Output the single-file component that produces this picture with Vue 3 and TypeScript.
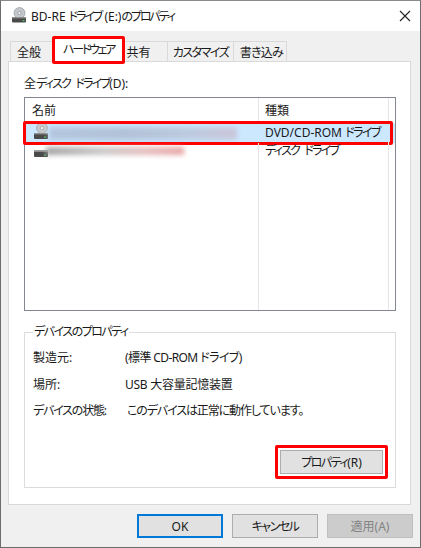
<script setup lang="ts">
const tabs: { label: string; cls: string }[] = [
  { label: '全般', cls: 't1' },
  { label: 'ハードウェア', cls: 't2 active' },
  { label: '共有', cls: 't3' },
  { label: 'カスタマイズ', cls: 't4 kn' },
  { label: '書き込み', cls: 't5' },
]
const props: { k: string; v: string; kc?: string; vc?: string }[] = [
  { k: '製造元:', v: '(標準 CD-ROM ドライブ)', vc: 'v1' },
  { k: '場所:', v: 'USB 大容量記憶装置', vc: 'v2' },
  { k: 'デバイスの状態:', v: 'このデバイスは正常に動作しています。', kc: 'k3', vc: 'v3' },
]
</script>

<template>
  <div class="win">
    <header class="title">
      <svg class="ticon" width="20" height="20" viewBox="0 0 20 20">
        <circle cx="10.5" cy="7" r="5.5" fill="#c4c8cc" stroke="#8a8d90" stroke-width=".6" />
        <circle cx="10.5" cy="7" r="1.6" fill="#f2f2f2" stroke="#777" stroke-width=".5" />
        <rect x="3" y="11" width="14" height="5.5" rx="1" fill="#4a4a4a" />
        <rect x="3" y="11" width="14" height="1.4" fill="#8d8d8d" />
        <rect x="13.5" y="14" width="2" height="1.2" fill="#52c05a" />
      </svg>
      <span class="ttext">BD-RE <span class="tk">ドライブ</span> (E:)<span class="tk">のプロパティ</span></span>
      <svg class="close" width="12" height="12" viewBox="0 0 12 12">
        <path d="M1 1 L11 11 M11 1 L1 11" stroke="#222" stroke-width="1.1" fill="none" />
      </svg>
    </header>

    <div class="body">
      <nav class="tabs">
        <div v-for="t in tabs" :key="t.label" class="tab" :class="t.cls">{{ t.label }}</div>
      </nav>

      <section class="panel">
        <div class="lbl">全<span class="kn gap">ディスク ドライブ</span>(D):</div>
        <div class="list">
          <div class="lhead">
            <div class="c1">名前</div>
            <div class="c2">種類</div>
            <div class="c3"></div>
          </div>
          <div class="row sel">
            <div class="c1">
              <svg class="dicon" width="20" height="22" viewBox="0 0 20 22">
                <circle cx="11" cy="7" r="5.5" fill="#c6c9cc" stroke="#9a9da0" stroke-width=".6" />
                <circle cx="11" cy="7" r="1.7" fill="#eee" stroke="#888" stroke-width=".5" />
                <rect x="3" y="12" width="14" height="6" rx="1" fill="#4a4a4a" />
                <rect x="3" y="12" width="14" height="1.4" fill="#909090" />
                <rect x="13" y="15.5" width="2" height="1.2" fill="#52c05a" />
              </svg>
              <div class="blur b1"></div>
            </div>
            <div class="c2">DVD/CD-ROM <span class="kn">ドライブ</span></div>
            <div class="c3"></div>
          </div>
          <div class="row second">
            <div class="c1">
              <svg class="dicon" width="20" height="14" viewBox="0 0 20 14">
                <rect x="3" y="3" width="14" height="7" rx="1" fill="#4a4a4a" />
                <rect x="3" y="3" width="14" height="1.8" fill="#a0a0a0" />
                <rect x="13" y="7.5" width="2" height="1.2" fill="#52c05a" />
              </svg>
              <div class="blur b2"></div>
            </div>
            <div class="c2 up kn gap">ディスク ドライブ</div>
            <div class="c3"></div>
          </div>
          <div class="fill">
            <div class="c1"></div>
            <div class="c2"></div>
            <div class="c3"></div>
          </div>
        </div>

        <fieldset class="group">
          <legend class="kn">デバイスのプロパティ</legend>
          <div v-for="p in props" :key="p.k" class="prop">
            <span class="k" :class="p.kc">{{ p.k }}</span>
            <span class="v" :class="p.vc">{{ p.v }}</span>
          </div>
          <div class="gfoot">
            <button class="btn prop-btn"><span class="kn">プロパティ</span>(R)</button>
          </div>
        </fieldset>
      </section>

      <footer class="foot">
        <button class="btn ok">OK</button>
        <button class="btn"><span class="kn">キャンセル</span></button>
        <button class="btn dis">適用(A)</button>
      </footer>
    </div>
  </div>
</template>

<style>
html, body { margin: 0; padding: 0; background: #f0f0f0; }
</style>

<style scoped>
.win {
  width: 421px;
  height: 548px;
  box-sizing: border-box;
  border: 1px solid #6d6d6d;
  border-top-color: #8a8a8a;
  background: #f0f0f0;
  display: flex;
  flex-direction: column;
  font-family: "Noto Sans", "Noto Sans CJK JP", sans-serif;
  font-size: 12px;
  font-feature-settings: "palt";
  color: #1a1a1a;
  white-space: nowrap;
  overflow: hidden;
}
.kn { letter-spacing: -1.5px; }
.gap { letter-spacing: -1.8px; word-spacing: 4px; }
.tk { letter-spacing: -2.1px; }
.title {
  height: 30px;
  flex: none;
  background: #fff;
  display: flex;
  align-items: center;
  padding: 0 10px 0 8px;
}
.ticon { margin-right: 2px; }
.ttext { flex: 1; font-size: 12px; }
.close { margin-right: -1px; }
.body {
  flex: 1;
  display: flex;
  flex-direction: column;
  padding: 10px 7px 0 7px;
  min-height: 0;
}
.tabs {
  display: flex;
  height: 20px;
  flex: none;
  padding-left: 2px;
  position: relative;
  z-index: 2;
}
.tab {
  box-sizing: border-box;
  height: 21px;
  border: 1px solid #d9d9d9;
  border-right: 0;
  background: #f0f0f0;
  display: flex;
  align-items: center;
  justify-content: center;
  font-size: 12px;
}
.t1 { width: 43px; padding-right: 6px; }
.t2 { width: 71px; letter-spacing: -2.3px; }
.t3 { width: 43px; padding-right: 15px; }
.t4 { width: 66px; }
.t5 { width: 54px; padding-left: 3px; border-right: 1px solid #d9d9d9; letter-spacing: -0.7px; }
.tab.active {
  background: #fff;
  border: 0;
  margin-top: -4px;
  padding-bottom: 1px;
  height: 25px;
  position: relative;
}
.tab.active::after {
  content: "";
  position: absolute;
  left: -1px;
  right: -1px;
  top: -1px;
  bottom: -2px;
  border: 3px solid #f00;
  border-radius: 2px;
}
.panel {
  box-sizing: border-box;
  height: 444px;
  flex: none;
  margin-right: 2px;
  background: #fff;
  border: 1px solid #d9d9d9;
  padding: 15px 14px 0 15px;
  display: flex;
  flex-direction: column;
}
.lbl { height: 14px; line-height: 14px; margin-bottom: 6px; }
.list {
  box-sizing: border-box;
  height: 214px;
  flex: none;
  border: 1px solid #828790;
  display: flex;
  flex-direction: column;
}
.lhead, .row, .fill { display: flex; }
.c1 { width: 234px; flex: none; box-sizing: border-box; border-right: 1px solid #e5e5e5; display: flex; align-items: center; }
.c2 { width: 130px; flex: none; box-sizing: border-box; border-right: 1px solid #e5e5e5; padding-left: 6px; }
.c3 { flex: 1; }
.lhead { height: 25px; line-height: 25px; }
.lhead .c1 { padding-left: 7px; }
.row { position: relative; height: 20px; line-height: 20px; }
.row .c1 { padding-left: 6px; position: relative; }
.sel { background: #cce8ff; }
.sel .c1, .sel .c2 { border-right-color: #cce8ff; }
.sel::after {
  content: "";
  position: absolute;
  left: -2px;
  right: 2px;
  top: -2px;
  bottom: -2px;
  border: 3px solid #f00;
  border-radius: 2px;
}
.dicon { flex: none; margin-top: -3px; }
.second { height: 18px; line-height: 18px; }
.second .dicon { margin-top: 3px; }
.up { margin-top: -1px; }
.blur {
  position: absolute;
  filter: blur(2.5px);
}
.b1 {
  left: 24px;
  top: 4px;
  width: 188px;
  height: 13px;
  background: linear-gradient(90deg, #b3c6de, #b2c2d8 40%, #bccae0 75%, #cbc6da);
}
.b2 {
  left: 21px;
  top: 4px;
  width: 138px;
  height: 8px;
  background: linear-gradient(90deg, #a3a3a3, #c8c8c8 40%, #e4bfbf 70%, #e8a5a5);
}
.fill { flex: 1; }
.group {
  box-sizing: border-box;
  margin: 13px 0 0;
  padding: 6px 0 0 8px;
  height: 164px;
  border: 1px solid #dcdcdc;
  display: flex;
  flex-direction: column;
  min-width: 0;
}
legend { padding: 0 1px; margin-left: 0; font-size: 12px; line-height: 16px; }
.prop { display: flex; height: 26.5px; line-height: 24px; }
.k { width: 92px; flex: none; }
.k3 { letter-spacing: -1.2px; }
.v1 { letter-spacing: -0.6px; }
.v2 { letter-spacing: -0.25px; }
.v3 { margin-left: 2px; letter-spacing: -1.1px; }
.gfoot { margin-top: 24px; display: flex; justify-content: flex-end; padding-right: 12px; }
.btn {
  box-sizing: border-box;
  width: 86px;
  height: 24px;
  border: 1px solid #adadad;
  background: #e1e1e1;
  font: inherit;
  font-feature-settings: "palt";
  color: #1a1a1a;
  padding: 0;
}
.prop-btn { width: 103px; position: relative; }
.prop-btn::after {
  content: "";
  position: absolute;
  inset: -6px;
  border: 3px solid #f00;
  border-radius: 2px;
}
.foot {
  flex: 1;
  display: flex;
  justify-content: flex-end;
  align-items: flex-start;
  gap: 9px;
  padding-top: 9px;
}
.ok { border: 2px solid #0078d7; }
.dis { background: #cccccc; border-color: #bfbfbf; color: #838383; }
</style>
